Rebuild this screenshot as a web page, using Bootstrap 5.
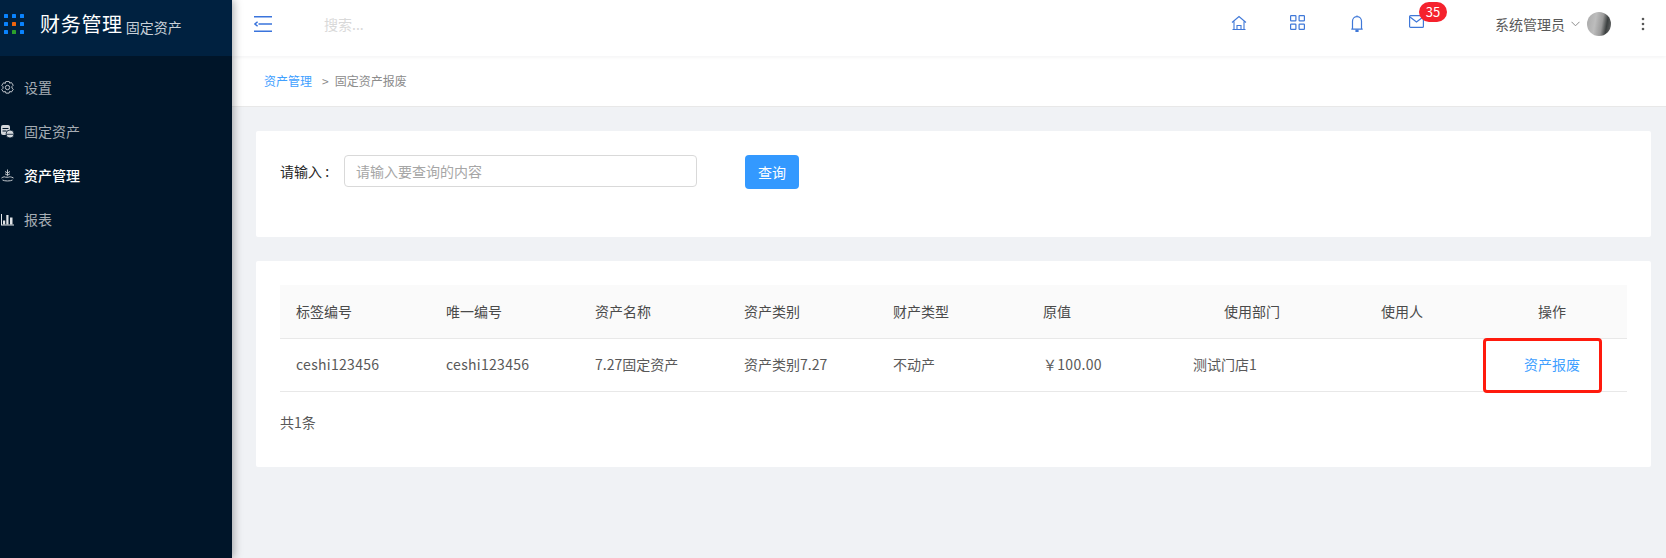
<!DOCTYPE html>
<html lang="zh-CN">
<head>
<meta charset="utf-8">
<title>固定资产报废</title>
<link rel="stylesheet" href="https://cdn.jsdelivr.net/npm/bootstrap@5.3.0/dist/css/bootstrap.min.css">
<style>
html,body{height:100%;overflow:hidden}
body{font-family:"Noto Sans CJK SC","Liberation Sans",sans-serif;font-size:14px;background:#f0f2f5;color:#595959}
.shell{height:558px}
.side{width:232px;flex:0 0 232px;background:#001529;position:relative;z-index:3;box-shadow:2px 0 8px rgba(29,35,41,.35)}
.brand{height:56px;background:#002140;padding:0 0 8px 4px;color:#fff}
.brand-main{font-size:20px;margin-left:16px;line-height:1;letter-spacing:.7px}
.brand-sub{font-size:14px;margin-left:3px;color:#c9d1d9;line-height:1;padding-top:5px}
.menu-list{padding-top:9px}
.menu-item{height:44px;padding-left:1px;color:#a6adb4;font-size:14px;gap:10px}
.menu-item.on{color:#fff;font-weight:500}
.menu-item svg{flex:0 0 13px}
.main-area{min-width:0}
.topbar{height:56px;background:#fff;box-shadow:0 1px 4px rgba(0,21,41,.06);position:relative;z-index:2;padding-bottom:8px}
.collapse-ico{margin-left:22px}
.search-hint{margin-left:52px;color:#d9d9d9;font-size:14px}
.top-ico{position:absolute;top:15px}
.notice{position:absolute;left:1187px;top:2px;width:28px;height:20px;border-radius:10px;background:#f5222d;color:#fff;font-size:13px;line-height:20px;text-align:center}
.user-box{position:absolute;left:1263px;top:12px;height:24px;gap:6px;color:#595959;font-size:14px}
.avatar{width:24px;height:24px;border-radius:50%;background:linear-gradient(100deg,#a9a9a9 0,#bdbdbd 35%,#9a9a9a 60%,#3c4040 78%,#6e6e6e 100%);margin-left:1px}
.kebab{position:absolute;left:1409px;top:17px;width:4px}
.crumbs{height:51px;background:#fff;border-bottom:1px solid #e8e8e8;padding-left:32px;font-size:12px;color:#8c8c8c}
.crumbs a{color:#40a0ff;text-decoration:none}
.crumbs .sep{margin:0 6px 0 10px}
.content{padding:24px 15px 0 24px}
.panel{background:#fff;border-radius:2px}
.filter-panel{height:106px;padding:24px 24px 0;margin-bottom:24px}
.filter-label{width:64px;color:#262626;line-height:32px;height:32px;white-space:pre}
.filter-input{width:353px;height:32px;border:1px solid #d9d9d9;border-radius:4px;padding:0 11px;font-size:14px;color:#262626}
.filter-input::placeholder{color:#a6a6a6}
.filter-btn{margin-left:48px;width:54px;height:34px;background:#3399ff;border:0;border-radius:4px;color:#fff;font-size:14px;padding:0}
.list-panel{height:206px;padding:24px}
.asset-table{table-layout:fixed;width:100%;margin:0;font-size:14px;color:#595959;border-collapse:collapse}
.asset-table th{background:#fafafa;height:53px;width:150px;font-weight:400;color:#4a4a4a;padding:0 16px;vertical-align:middle;border-bottom:1px solid #e8e8e8}
.asset-table th:nth-child(2),.asset-table th:nth-child(3),.asset-table th:nth-child(4){width:149px}
.asset-table td{height:53px;padding:0 16px;vertical-align:middle;border-bottom:1px solid #e8e8e8}
.asset-table .code-cell{letter-spacing:.3px}
.asset-table .cell-op{position:relative;text-align:center}
.asset-table .cell-op a{color:#40a0ff;text-decoration:none}
.mark-box{position:absolute;left:6px;top:-1px;width:119px;height:55px;border:3px solid #ff1a0d;border-radius:4px;pointer-events:none}
.total-line{margin-top:19px;color:#595959;line-height:22px}
</style>
</head>
<body>
<div class="shell d-flex">
  <aside class="side">
    <div class="brand d-flex align-items-center">
      <svg width="20" height="20" viewBox="0 0 20 20" aria-hidden="true" class="flex-shrink-0"><g fill="#0a84ff"><rect width="4" height="4" rx=".6"/><rect x="8" width="4" height="4" rx=".6"/><rect x="16" width="4" height="4" rx=".6"/><rect y="8" width="4" height="4" rx=".6"/><rect x="16" y="8" width="4" height="4" rx=".6"/><rect y="16" width="4" height="4" rx=".6"/><rect x="16" y="16" width="4" height="4" rx=".6"/></g><rect x="8" y="8" width="4" height="4" rx=".6" fill="#f0650e"/><rect x="8" y="16" width="4" height="4" rx=".6" fill="#2ca02c"/></svg>
      <span class="brand-main">财务管理</span><span class="brand-sub">固定资产</span>
    </div>
    <nav class="menu-list d-flex flex-column">
      <div class="menu-item d-flex align-items-center">
        <svg width="13" height="13" viewBox="1 .2 11 12" fill="none" stroke="#c4c9ce" stroke-width=".9"><path d="M5 .6h3l.5 1.600 1.600-.6 1.700 2.500-1.200 1.200v1.400l1.200 1.200-1.700 2.500-1.600-.6-.5 1.600H5l-.5-1.600-1.600.6L1.200 8.100l1.200-1.200V5.500L1.200 4.300l1.700-2.500 1.600.6z"/><circle cx="6.500" cy="6.200" r="2"/></svg>
        <span>设置</span>
      </div>
      <div class="menu-item d-flex align-items-center">
        <svg width="13" height="13" viewBox="0 0 13 13"><rect x="0" y="0" width="9" height="10" rx="2" fill="#d2d6da"/><path d="M1.500 3.500h6M1.500 6h4" stroke="#001529"/><ellipse cx="9" cy="9" rx="4" ry="4" fill="#d2d6da" stroke="#001529" stroke-width=".8"/><path d="M5.500 9.300h7" stroke="#001529" stroke-width=".8"/></svg>
        <span>固定资产</span>
      </div>
      <div class="menu-item on d-flex align-items-center">
        <svg width="13" height="13" viewBox="0 0 13 13" fill="none" stroke="#c4c9ce"><path d="M6.500 .5v6M4 2.500l2.500 1.500L9 2.500M4 4.800l2.500 1.500L9 4.800"/><path d="M.5 9c2-1.500 3.500-1.300 4-.8h3c.8-.5 2.500-.6 5 .8M1.500 11c2 1.300 8 1.300 10 0"/></svg>
        <span>资产管理</span>
      </div>
      <div class="menu-item d-flex align-items-center">
        <svg width="13" height="13" viewBox="0 0 13 13" fill="#e0e3e6"><rect y="1" width="1" height="11"/><rect y="11.500" width="13" height="1"/><rect x="2" y="7.500" width="2.200" height="4"/><rect x="5.300" y="2" width="2.200" height="9.500"/><rect x="9" y="4.500" width="2.500" height="7"/></svg>
        <span>报表</span>
      </div>
    </nav>
  </aside>

  <div class="main-area flex-grow-1">
    <header class="topbar d-flex align-items-center">
      <svg class="collapse-ico" width="18" height="16" viewBox="0 0 18 16" fill="none" stroke="#3a74dc" stroke-width="1.500"><path d="M0 .8h18M4.500 8H18M0 15.200h18M3.600 5.800 1 8l2.600 2.200"/></svg>
      <span class="search-hint">搜索...</span>
      <svg class="top-ico" style="left:999px" width="16" height="16" viewBox="0 0 16 16" fill="none" stroke="#3f78d8" stroke-width="1.100"><path d="M1 7.500 8 1.500l7 6M3 6.500V14.500h10V6.500M6 14.500V10.500h4v4M1.500 14.500h13"/></svg>
      <svg class="top-ico" style="left:1058px" width="15" height="15" viewBox="0 0 15 15" fill="none" stroke="#3f78d8" stroke-width="1.200"><rect x=".6" y=".6" width="5.300" height="5.300" rx=".6"/><rect x="9.100" y=".6" width="5.300" height="5.300" rx=".6"/><rect x=".6" y="9.100" width="5.300" height="5.300" rx=".6"/><rect x="9.100" y="9.100" width="5.300" height="5.300" rx=".6"/></svg>
      <svg class="top-ico" style="left:1119px" width="12" height="17" viewBox="0 0 12 17" fill="none" stroke="#3f78d8" stroke-width="1.200"><path d="M1.500 14V6.200a4.500 4.500 0 0 1 9 0V14M.3 14.200h11.400M6 .5v1.200"/><path d="M5 15h2v1.500H5z" fill="#3f78d8"/></svg>
      <svg class="top-ico" style="left:1177px" width="15" height="13" viewBox="0 0 15 13" fill="none" stroke="#3f78d8" stroke-width="1.200"><rect x=".6" y=".6" width="13.800" height="11.800" rx="1"/><path d="M1 2l6.500 5L14 2"/></svg>
      <span class="notice">35</span>
      <div class="user-box d-flex align-items-center">
        <span>系统管理员</span>
        <svg width="9" height="6" viewBox="0 0 9 6" fill="none" stroke="#8c8c8c"><path d="M.5.800 4.500 4.800 8.500.8"/></svg>
        <span class="avatar"></span>
      </div>
      <svg class="kebab" width="4" height="14" viewBox="0 0 4 14" fill="#595959"><circle cx="2" cy="2" r="1.300"/><circle cx="2" cy="7" r="1.300"/><circle cx="2" cy="12" r="1.300"/></svg>
    </header>

    <div class="crumbs d-flex align-items-center">
      <a href="#">资产管理</a><span class="sep">&gt;</span><span>固定资产报废</span>
    </div>

    <main class="content">
      <section class="panel filter-panel d-flex align-items-start">
        <label class="filter-label" for="q">请输入 :</label>
        <input id="q" class="filter-input" type="text" placeholder="请输入要查询的内容">
        <button class="filter-btn" type="button">查询</button>
      </section>
      <section class="panel list-panel">
        <table class="asset-table">
          <thead>
            <tr>
              <th>标签编号</th><th>唯一编号</th><th>资产名称</th><th>资产类别</th><th>财产类型</th><th>原值</th>
              <th class="text-center">使用部门</th><th class="text-center">使用人</th><th class="text-center">操作</th>
            </tr>
          </thead>
          <tbody>
            <tr>
              <td class="code-cell">ceshi123456</td><td class="code-cell">ceshi123456</td><td>7.27固定资产</td><td>资产类别7.27</td><td>不动产</td><td class="code-cell">￥100.00</td>
              <td>测试门店1</td><td></td>
              <td class="cell-op"><a href="#">资产报废</a><span class="mark-box"></span></td>
            </tr>
          </tbody>
        </table>
        <div class="total-line">共1条</div>
      </section>
    </main>
  </div>
</div>
<script src="https://cdn.jsdelivr.net/npm/bootstrap@5.3.0/dist/js/bootstrap.bundle.min.js"></script>
</body>
</html>
